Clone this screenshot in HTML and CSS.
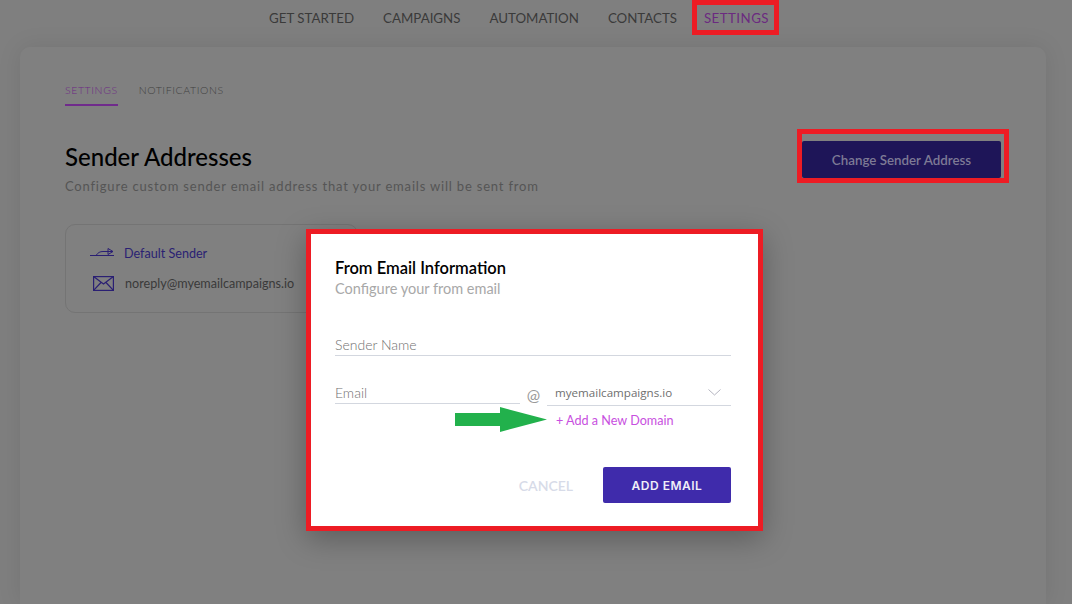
FILE: index.html
```html
<!DOCTYPE html>
<html lang="en">
<head>
<meta charset="utf-8">
<title>Settings</title>
<link rel="stylesheet" href="styles.css">
</head>
<body>
<div class="page">
  <nav class="topnav">
    <a>GET STARTED</a>
    <a>CAMPAIGNS</a>
    <a>AUTOMATION</a>
    <a>CONTACTS</a>
    <a class="active">SETTINGS<span class="mark mark-nav"></span></a>
  </nav>
  <main class="card">
    <div class="tabs">
      <a class="tab tab-on">SETTINGS</a>
      <a class="tab">NOTIFICATIONS</a>
    </div>
    <header class="head">
      <div>
        <h1>Sender Addresses</h1>
        <p class="sub">Configure custom sender email address that your emails will be sent from</p>
      </div>
      <button class="change">Change Sender Address<span class="mark mark-btn"></span></button>
    </header>
    <section class="sender">
      <div class="row row-default">
        <svg class="ico-send" width="24" height="10" viewBox="0 0 24 10" fill="none" stroke="#2a1f73" stroke-width="1"><path d="M0 7.5H24M6 7.5C8 4.5 10 3.5 13 3.5H23M18 0.5L23 3.5L18 6.5V0.5"/></svg>
        <span class="label">Default Sender</span>
      </div>
      <div class="row row-mail">
        <svg class="ico-mail" width="21" height="15" viewBox="0 0 21 15" fill="none" stroke="#2a1f73" stroke-width="1.2"><rect x="0.6" y="0.6" width="19.8" height="13.8"/><path d="M0.6 0.6L10.5 8L20.4 0.6M0.6 14.4L8 6.5M20.4 14.4L13 6.5"/></svg>
        <span class="addr">noreply@myemailcampaigns.io</span>
      </div>
    </section>
  </main>
</div>

<div class="modal">
  <h2>From Email Information</h2>
  <p class="modal-sub">Configure your from email</p>
  <div class="field field-name">Sender Name</div>
  <div class="email-row">
    <div class="field field-email">Email</div>
    <span class="at">@</span>
    <div class="domain-col">
      <div class="domain">
        <span>myemailcampaigns.io</span>
        <svg width="13" height="7" viewBox="0 0 13 7" fill="none" stroke="#b5b5c0" stroke-width="1"><path d="M0.5 0.5L6.5 6L12.5 0.5"/></svg>
      </div>
      <a class="add-domain">+ Add a New Domain</a>
    </div>
  </div>
  <div class="actions">
    <a class="cancel">CANCEL</a>
    <button class="add">ADD EMAIL</button>
  </div>
</div>
<svg class="arrow" width="92" height="25" viewBox="0 0 92 25"><polygon fill="#22b14c" points="0,6 45,6 45,0 92,12.5 45,25 45,19 0,19"/></svg>
</body>
</html>
```
FILE: styles.css
```css
* { box-sizing: border-box; }
html, body { margin: 0; height: 100%; }
body {
  background: #7f7f7f;
  font-family: Lato, "Liberation Sans", sans-serif;
  overflow: hidden;
  position: relative;
}
.page { display: flex; flex-direction: column; height: 604px; }
.topnav {
  height: 47px;
  flex: none;
  display: flex;
  justify-content: center;
  gap: 29px;
  padding: 9px 34px 0 0;
  font-size: 13.3px;
  line-height: 18px;
  color: #3a3a3a;
}
.topnav a { position: relative; }
.topnav .active { color: #6b2a80; letter-spacing: 0.45px; margin-left: -2px; }
.mark { position: absolute; border: 5px solid #ed1c24; }
.mark-nav { left: -12px; right: -10px; top: -9px; height: 35px; }
.card {
  margin: 0 26px 0 20px;
  flex: 1;
  background: #808080;
  border-radius: 10px 10px 0 0;
  box-shadow: 0 0 24px rgba(0,0,0,.09);
  padding: 36px 45px 0;
}
.tabs { display: flex; gap: 21px; }
.tab {
  font-size: 10.5px;
  letter-spacing: 0.6px;
  line-height: 14px;
  color: #404040;
  height: 23px;
  font-weight: 300;
}
.tab-on { color: #6e2a85; border-bottom: 2px solid #702b8c; }
.head {
  display: flex;
  justify-content: space-between;
  align-items: flex-start;
  padding: 36px 0 0 0;
}
h1 {
  margin: 0;
  font-size: 24px;
  line-height: 30px;
  font-weight: 500;
  color: #000;
}
.sub {
  margin: 5px 0 0;
  font-size: 13px;
  line-height: 18px;
  letter-spacing: 0.81px;
  color: #555;
}
.change {
  position: relative;
  margin: -1px 0 0;
  width: 199px;
  height: 37px;
  border: 0;
  border-radius: 2px;
  background: #1e1558;
  color: #7d7a95;
  font: 600 13.35px Lato, sans-serif;
}
.mark-btn { left: -5px; right: -8px; top: -12px; bottom: -5px; }
.sender {
  width: 293px;
  height: 89px;
  margin-top: 29px;
  border: 1px solid #747474;
  border-radius: 10px;
  padding: 19px 0 0 24px;
}
.row { display: flex; align-items: center; }
.row-default { height: 18px; font-size: 12.6px; color: #2a1f73; }
.ico-send { margin-right: 10px; }
.row-mail { margin-top: 12px; height: 18px; font-size: 12.6px; padding-left: 3px; }
.ico-mail { margin-right: 11px; }
.addr { color: #3a3a3a; }
.modal {
  position: absolute;
  left: 306px;
  top: 229px;
  width: 457px;
  height: 302px;
  border: 5px solid #ed1c24;
  background: #fff;
  padding: 24px 27px 0 24px;
  box-shadow: 0 8px 28px rgba(0,0,0,.28);
}
h2 {
  margin: 0;
  font-size: 16.5px;
  line-height: 20px;
  font-weight: 600;
  color: #000;
}
.modal-sub { margin: 1px 0 0; font-size: 14.5px; line-height: 20px; color: #a8a8a8; }
.field {
  font-size: 14px;
  font-weight: 300;
  line-height: 20px;
  color: #707070;
  border-bottom: 1px solid #d3d7df;
  height: 22px;
  padding-top: 1px;
}
.field-name { margin-top: 35px; }
.email-row { display: flex; margin-top: 26px; position: relative; }
.field-email { width: 185px; height: 22px; }
.at { width: 27px; margin-top: 3px; text-align: center; font-size: 16px; line-height: 20px; color: #999; }
.domain-col { flex: 1; }
.domain {
  height: 24px;
  display: flex;
  justify-content: space-between;
  align-items: center;
  padding: 0 10px 2px 8px;
  border-bottom: 1px solid #d3d7df;
  font: 11.6px "Open Sans", Lato, sans-serif;
  color: #6f6f6f;
}
.add-domain {
  display: block;
  margin: 6px 0 0 9px;
  font-size: 12.6px;
  line-height: 18px;
  color: #c84fe0;
}
.actions { display: flex; justify-content: flex-end; align-items: center; gap: 30px; margin-top: 37px; }
.cancel { font-size: 14px; font-weight: 600; color: #d7dbe8; }
.add {
  width: 128px;
  height: 36px;
  border: 0;
  border-radius: 2px;
  background: #3f2bab;
  color: #f0eef8;
  font: 600 12px Inter, Lato, sans-serif;
  letter-spacing: 0.5px;
}
.arrow { position: absolute; left: 455px; top: 407px; }
```
